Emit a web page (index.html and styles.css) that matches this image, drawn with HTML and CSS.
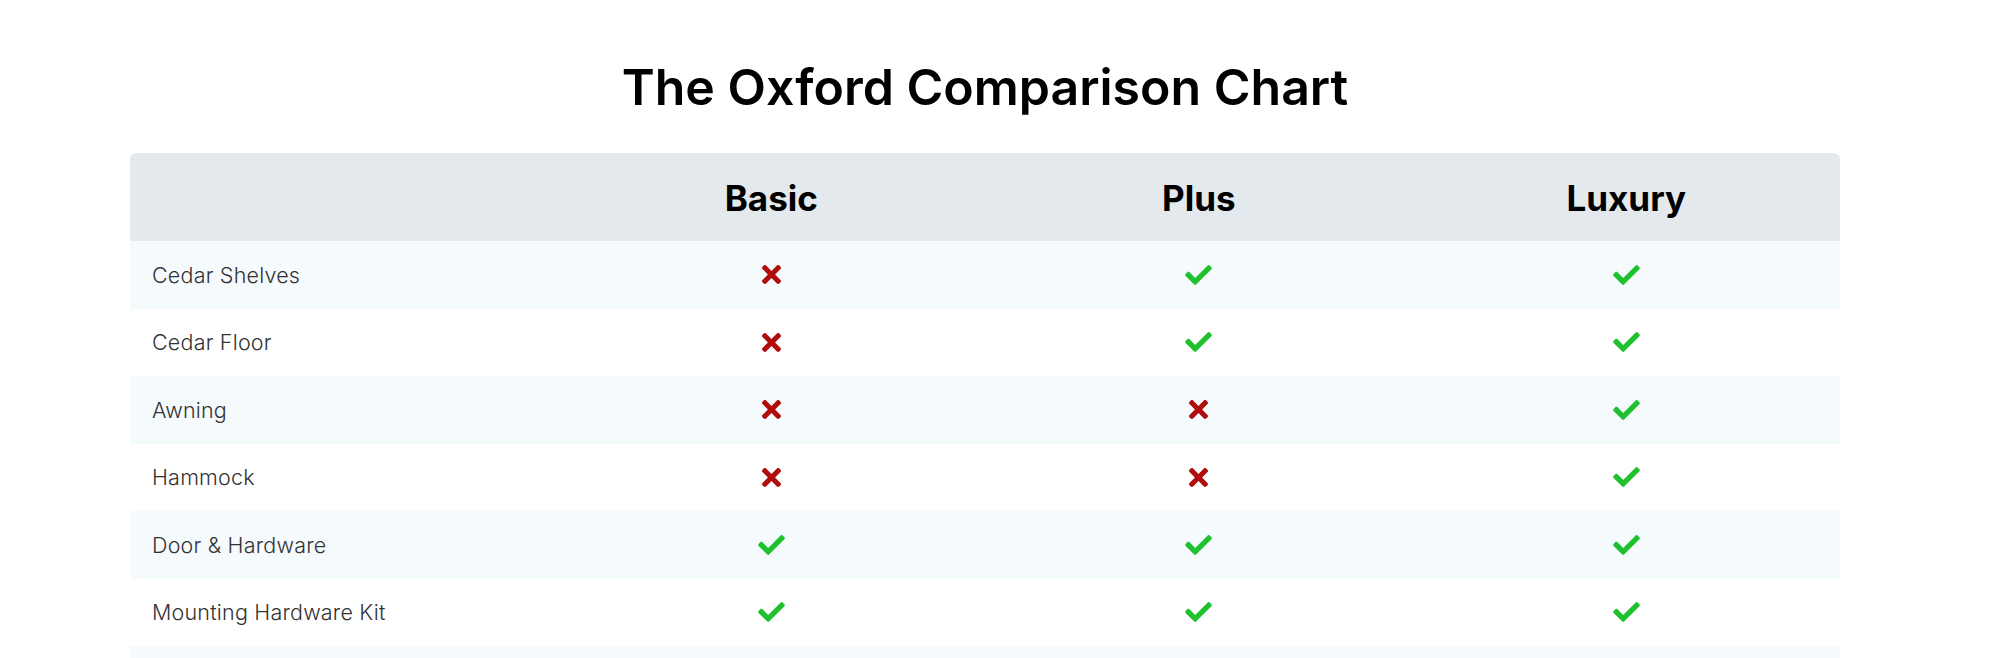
FILE: index.html
```html
<!DOCTYPE html>
<html lang="en">
<head>
<meta charset="utf-8">
<title>The Oxford Comparison Chart</title>
<link rel="stylesheet" href="styles.css">
</head>
<body>
<main class="page">
  <h1 class="title">The Oxford Comparison Chart</h1>
  <div class="chart">
    <div class="row head">
      <div class="cell label"></div>
      <div class="cell plan">Basic</div>
      <div class="cell plan">Plus</div>
      <div class="cell plan">Luxury</div>
    </div>
    <div class="row alt">
      <div class="cell label">Cedar Shelves</div>
      <div class="cell"><svg class="no" viewBox="0 80 352 352"><path d="M242.72 256l100.07-100.07c12.28-12.28 12.28-32.19 0-44.48l-22.24-22.24c-12.28-12.28-32.19-12.28-44.48 0L176 189.28 75.93 89.21c-12.28-12.28-32.19-12.28-44.48 0L9.21 111.45c-12.28 12.28-12.28 32.19 0 44.48L109.28 256 9.21 356.07c-12.28 12.28-12.28 32.19 0 44.48l22.24 22.24c12.28 12.28 32.2 12.28 44.48 0L176 322.72l100.07 100.07c12.28 12.28 32.2 12.28 44.48 0l22.24-22.24c12.28-12.28 12.28-32.19 0-44.48L242.72 256z"/></svg></div>
      <div class="cell"><svg class="yes" viewBox="0 64 512 384"><path d="M173.898 439.404l-166.4-166.4c-9.997-9.997-9.997-26.206 0-36.204l36.203-36.204c9.997-9.998 26.207-9.998 36.204 0L192 312.69 432.095 72.596c9.997-9.997 26.207-9.997 36.204 0l36.203 36.204c9.997 9.997 9.997 26.206 0 36.204l-294.4 294.401c-9.998 9.997-26.207 9.997-36.204-.001z"/></svg></div>
      <div class="cell"><svg class="yes" viewBox="0 64 512 384"><path d="M173.898 439.404l-166.4-166.4c-9.997-9.997-9.997-26.206 0-36.204l36.203-36.204c9.997-9.998 26.207-9.998 36.204 0L192 312.69 432.095 72.596c9.997-9.997 26.207-9.997 36.204 0l36.203 36.204c9.997 9.997 9.997 26.206 0 36.204l-294.4 294.401c-9.998 9.997-26.207 9.997-36.204-.001z"/></svg></div>
    </div>
    <div class="row">
      <div class="cell label">Cedar Floor</div>
      <div class="cell"><svg class="no" viewBox="0 80 352 352"><path d="M242.72 256l100.07-100.07c12.28-12.28 12.28-32.19 0-44.48l-22.24-22.24c-12.28-12.28-32.19-12.28-44.48 0L176 189.28 75.93 89.21c-12.28-12.28-32.19-12.28-44.48 0L9.21 111.45c-12.28 12.28-12.28 32.19 0 44.48L109.28 256 9.21 356.07c-12.28 12.28-12.28 32.19 0 44.48l22.24 22.24c12.28 12.28 32.2 12.28 44.48 0L176 322.72l100.07 100.07c12.28 12.28 32.2 12.28 44.48 0l22.24-22.24c12.28-12.28 12.28-32.19 0-44.48L242.72 256z"/></svg></div>
      <div class="cell"><svg class="yes" viewBox="0 64 512 384"><path d="M173.898 439.404l-166.4-166.4c-9.997-9.997-9.997-26.206 0-36.204l36.203-36.204c9.997-9.998 26.207-9.998 36.204 0L192 312.69 432.095 72.596c9.997-9.997 26.207-9.997 36.204 0l36.203 36.204c9.997 9.997 9.997 26.206 0 36.204l-294.4 294.401c-9.998 9.997-26.207 9.997-36.204-.001z"/></svg></div>
      <div class="cell"><svg class="yes" viewBox="0 64 512 384"><path d="M173.898 439.404l-166.4-166.4c-9.997-9.997-9.997-26.206 0-36.204l36.203-36.204c9.997-9.998 26.207-9.998 36.204 0L192 312.69 432.095 72.596c9.997-9.997 26.207-9.997 36.204 0l36.203 36.204c9.997 9.997 9.997 26.206 0 36.204l-294.4 294.401c-9.998 9.997-26.207 9.997-36.204-.001z"/></svg></div>
    </div>
    <div class="row alt">
      <div class="cell label">Awning</div>
      <div class="cell"><svg class="no" viewBox="0 80 352 352"><path d="M242.72 256l100.07-100.07c12.28-12.28 12.28-32.19 0-44.48l-22.24-22.24c-12.28-12.28-32.19-12.28-44.48 0L176 189.28 75.93 89.21c-12.28-12.28-32.19-12.28-44.48 0L9.21 111.45c-12.28 12.28-12.28 32.19 0 44.48L109.28 256 9.21 356.07c-12.28 12.28-12.28 32.19 0 44.48l22.24 22.24c12.28 12.28 32.2 12.28 44.48 0L176 322.72l100.07 100.07c12.28 12.28 32.2 12.28 44.48 0l22.24-22.24c12.28-12.28 12.28-32.19 0-44.48L242.72 256z"/></svg></div>
      <div class="cell"><svg class="no" viewBox="0 80 352 352"><path d="M242.72 256l100.07-100.07c12.28-12.28 12.28-32.19 0-44.48l-22.24-22.24c-12.28-12.28-32.19-12.28-44.48 0L176 189.28 75.93 89.21c-12.28-12.28-32.19-12.28-44.48 0L9.21 111.45c-12.28 12.28-12.28 32.19 0 44.48L109.28 256 9.21 356.07c-12.28 12.28-12.28 32.19 0 44.48l22.24 22.24c12.28 12.28 32.2 12.28 44.48 0L176 322.72l100.07 100.07c12.28 12.28 32.2 12.28 44.48 0l22.24-22.24c12.28-12.28 12.28-32.19 0-44.48L242.72 256z"/></svg></div>
      <div class="cell"><svg class="yes" viewBox="0 64 512 384"><path d="M173.898 439.404l-166.4-166.4c-9.997-9.997-9.997-26.206 0-36.204l36.203-36.204c9.997-9.998 26.207-9.998 36.204 0L192 312.69 432.095 72.596c9.997-9.997 26.207-9.997 36.204 0l36.203 36.204c9.997 9.997 9.997 26.206 0 36.204l-294.4 294.401c-9.998 9.997-26.207 9.997-36.204-.001z"/></svg></div>
    </div>
    <div class="row">
      <div class="cell label">Hammock</div>
      <div class="cell"><svg class="no" viewBox="0 80 352 352"><path d="M242.72 256l100.07-100.07c12.28-12.28 12.28-32.19 0-44.48l-22.24-22.24c-12.28-12.28-32.19-12.28-44.48 0L176 189.28 75.93 89.21c-12.28-12.28-32.19-12.28-44.48 0L9.21 111.45c-12.28 12.28-12.28 32.19 0 44.48L109.28 256 9.21 356.07c-12.28 12.28-12.28 32.19 0 44.48l22.24 22.24c12.28 12.28 32.2 12.28 44.48 0L176 322.72l100.07 100.07c12.28 12.28 32.2 12.28 44.48 0l22.24-22.24c12.28-12.28 12.28-32.19 0-44.48L242.72 256z"/></svg></div>
      <div class="cell"><svg class="no" viewBox="0 80 352 352"><path d="M242.72 256l100.07-100.07c12.28-12.28 12.28-32.19 0-44.48l-22.24-22.24c-12.28-12.28-32.19-12.28-44.48 0L176 189.28 75.93 89.21c-12.28-12.28-32.19-12.28-44.48 0L9.21 111.45c-12.28 12.28-12.28 32.19 0 44.48L109.28 256 9.21 356.07c-12.28 12.28-12.28 32.19 0 44.48l22.24 22.24c12.28 12.28 32.2 12.28 44.48 0L176 322.72l100.07 100.07c12.28 12.28 32.2 12.28 44.48 0l22.24-22.24c12.28-12.28 12.28-32.19 0-44.48L242.72 256z"/></svg></div>
      <div class="cell"><svg class="yes" viewBox="0 64 512 384"><path d="M173.898 439.404l-166.4-166.4c-9.997-9.997-9.997-26.206 0-36.204l36.203-36.204c9.997-9.998 26.207-9.998 36.204 0L192 312.69 432.095 72.596c9.997-9.997 26.207-9.997 36.204 0l36.203 36.204c9.997 9.997 9.997 26.206 0 36.204l-294.4 294.401c-9.998 9.997-26.207 9.997-36.204-.001z"/></svg></div>
    </div>
    <div class="row alt">
      <div class="cell label">Door &amp; Hardware</div>
      <div class="cell"><svg class="yes" viewBox="0 64 512 384"><path d="M173.898 439.404l-166.4-166.4c-9.997-9.997-9.997-26.206 0-36.204l36.203-36.204c9.997-9.998 26.207-9.998 36.204 0L192 312.69 432.095 72.596c9.997-9.997 26.207-9.997 36.204 0l36.203 36.204c9.997 9.997 9.997 26.206 0 36.204l-294.4 294.401c-9.998 9.997-26.207 9.997-36.204-.001z"/></svg></div>
      <div class="cell"><svg class="yes" viewBox="0 64 512 384"><path d="M173.898 439.404l-166.4-166.4c-9.997-9.997-9.997-26.206 0-36.204l36.203-36.204c9.997-9.998 26.207-9.998 36.204 0L192 312.69 432.095 72.596c9.997-9.997 26.207-9.997 36.204 0l36.203 36.204c9.997 9.997 9.997 26.206 0 36.204l-294.4 294.401c-9.998 9.997-26.207 9.997-36.204-.001z"/></svg></div>
      <div class="cell"><svg class="yes" viewBox="0 64 512 384"><path d="M173.898 439.404l-166.4-166.4c-9.997-9.997-9.997-26.206 0-36.204l36.203-36.204c9.997-9.998 26.207-9.998 36.204 0L192 312.69 432.095 72.596c9.997-9.997 26.207-9.997 36.204 0l36.203 36.204c9.997 9.997 9.997 26.206 0 36.204l-294.4 294.401c-9.998 9.997-26.207 9.997-36.204-.001z"/></svg></div>
    </div>
    <div class="row">
      <div class="cell label">Mounting Hardware Kit</div>
      <div class="cell"><svg class="yes" viewBox="0 64 512 384"><path d="M173.898 439.404l-166.4-166.4c-9.997-9.997-9.997-26.206 0-36.204l36.203-36.204c9.997-9.998 26.207-9.998 36.204 0L192 312.69 432.095 72.596c9.997-9.997 26.207-9.997 36.204 0l36.203 36.204c9.997 9.997 9.997 26.206 0 36.204l-294.4 294.401c-9.998 9.997-26.207 9.997-36.204-.001z"/></svg></div>
      <div class="cell"><svg class="yes" viewBox="0 64 512 384"><path d="M173.898 439.404l-166.4-166.4c-9.997-9.997-9.997-26.206 0-36.204l36.203-36.204c9.997-9.998 26.207-9.998 36.204 0L192 312.69 432.095 72.596c9.997-9.997 26.207-9.997 36.204 0l36.203 36.204c9.997 9.997 9.997 26.206 0 36.204l-294.4 294.401c-9.998 9.997-26.207 9.997-36.204-.001z"/></svg></div>
      <div class="cell"><svg class="yes" viewBox="0 64 512 384"><path d="M173.898 439.404l-166.4-166.4c-9.997-9.997-9.997-26.206 0-36.204l36.203-36.204c9.997-9.998 26.207-9.998 36.204 0L192 312.69 432.095 72.596c9.997-9.997 26.207-9.997 36.204 0l36.203 36.204c9.997 9.997 9.997 26.206 0 36.204l-294.4 294.401c-9.998 9.997-26.207 9.997-36.204-.001z"/></svg></div>
    </div>
    <div class="row alt">
      <div class="cell label"></div>
      <div class="cell"></div>
      <div class="cell"></div>
      <div class="cell"></div>
    </div>
  </div>
</main>
</body>
</html>
```

FILE: styles.css
```css
* { box-sizing: border-box; }

html, body {
  margin: 0;
  padding: 0;
  background: #ffffff;
}

body {
  font-family: Inter, "Liberation Sans", sans-serif;
  color: #222;
}

.page {
  width: 1710px;
  margin-left: 130px;
  padding-top: 57px;
}

.title {
  margin: 0 0 36px;
  text-align: center;
  font-family: Inter, "Liberation Sans", sans-serif;
  font-weight: 600;
  font-size: 50px;
  line-height: 60px;
  color: #000;
}

.chart {
  border-radius: 6px 6px 0 0;
  overflow: hidden;
}

.row {
  display: grid;
  grid-template-columns: repeat(4, 1fr);
  height: 67.5px;
}

.row.head {
  height: 88px;
  background: #e3e9ed;
}

.row.alt {
  background: #f5fafd;
}

.cell {
  display: flex;
  align-items: center;
  justify-content: center;
}

.cell.label {
  justify-content: flex-start;
  padding-left: 22px;
  font-family: Inter, "Liberation Sans", sans-serif;
  font-weight: 300;
  font-size: 21.5px;
  letter-spacing: 0.2px;
  color: #333;
}

.cell.plan {
  font-weight: 700;
  font-size: 35px;
  color: #000;
  padding-top: 2px;
}

.yes {
  width: 27px;
  height: 20px;
  fill: #1fc12f;
}

.no {
  width: 19px;
  height: 19px;
  fill: #b00c0c;
}
```
